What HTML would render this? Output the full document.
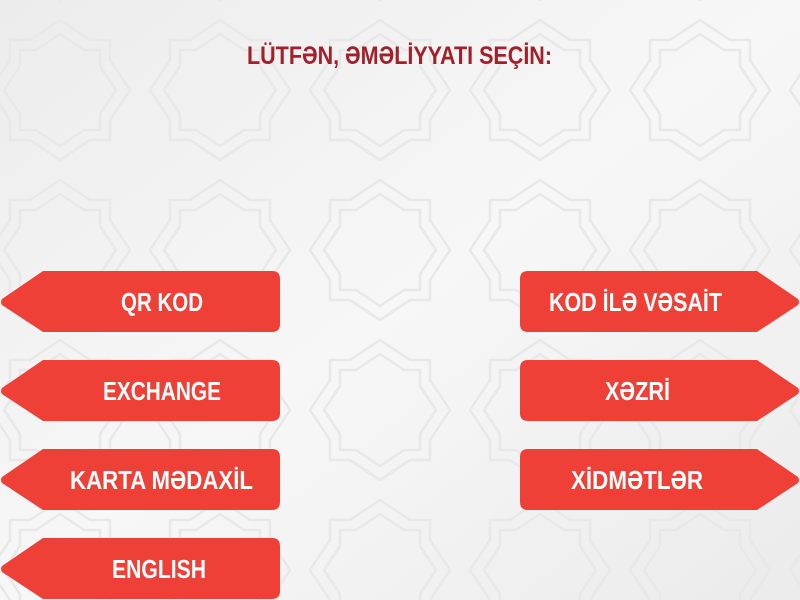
<!DOCTYPE html>
<html><head><meta charset="utf-8"><style>
html,body{margin:0;padding:0;width:800px;height:600px;overflow:hidden;background:#f1f1f1}
</style></head><body>
<svg width="800" height="600" viewBox="0 0 800 600" xmlns="http://www.w3.org/2000/svg">
<defs>
<linearGradient id="bg" x1="0" y1="0" x2="1" y2="1">
<stop offset="0" stop-color="#ececec"/><stop offset="0.5" stop-color="#f7f7f7"/><stop offset="1" stop-color="#ebebeb"/>
</linearGradient>
<pattern id="pt" width="160" height="160" patternUnits="userSpaceOnUse" x="-20" y="10">
<g fill="none" stroke="#e8e8e8" stroke-width="2.5">
<path d="M80 10 L110 30 L130 30 L130 50 L150 80 L130 110 L130 130 L110 130 L80 150 L50 130 L30 130 L30 110 L10 80 L30 50 L30 30 L50 30 Z"/>
<path d="M80 24 L104 40 L120 40 L120 56 L136 80 L120 104 L120 120 L104 120 L80 136 L56 120 L40 120 L40 104 L24 80 L40 56 L40 40 L56 40 Z"/>
</g>
</pattern>
</defs>
<rect width="800" height="600" fill="url(#bg)"/>
<rect width="800" height="600" fill="url(#pt)"/>
<text x="247" y="64" textLength="305" lengthAdjust="spacingAndGlyphs" font-family="Liberation Sans, sans-serif" font-weight="bold" font-size="25" fill="#a3202b">LÜTFƏN, ƏMƏLİYYATI SEÇİN:</text>
<g fill="#ee4037">
<path d="M43 271 H272 Q280 271 280 279 V324 Q280 332 272 332 H43 L2 305 Q0 302 2 299 Z"/>
<path d="M43 360 H272 Q280 360 280 368 V413 Q280 421 272 421 H43 L2 394 Q0 391 2 388 Z"/>
<path d="M43 449 H272 Q280 449 280 457 V502 Q280 510 272 510 H43 L2 483 Q0 480 2 477 Z"/>
<path d="M43 538 H272 Q280 538 280 546 V591 Q280 599 272 599 H43 L2 572 Q0 569 2 566 Z"/>
<path d="M757 271 H528 Q520 271 520 279 V324 Q520 332 528 332 H757 L798 305 Q800 302 798 299 Z"/>
<path d="M757 360 H528 Q520 360 520 368 V413 Q520 421 528 421 H757 L798 394 Q800 391 798 388 Z"/>
<path d="M757 449 H528 Q520 449 520 457 V502 Q520 510 528 510 H757 L798 483 Q800 480 798 477 Z"/>
</g>
<g font-family="Liberation Sans, sans-serif" font-weight="bold" font-size="26" fill="#fff">
<text x="121" y="311" textLength="82" lengthAdjust="spacingAndGlyphs">QR KOD</text>
<text x="103" y="400" textLength="118" lengthAdjust="spacingAndGlyphs">EXCHANGE</text>
<text x="70" y="489" textLength="183" lengthAdjust="spacingAndGlyphs">KARTA MƏDAXİL</text>
<text x="112" y="578" textLength="94" lengthAdjust="spacingAndGlyphs">ENGLISH</text>
<text x="549" y="311" textLength="173" lengthAdjust="spacingAndGlyphs">KOD İLƏ VƏSAİT</text>
<text x="605" y="400" textLength="65" lengthAdjust="spacingAndGlyphs">XƏZRİ</text>
<text x="571" y="489" textLength="132" lengthAdjust="spacingAndGlyphs">XİDMƏTLƏR</text>
</g>
</svg>
</body></html>
